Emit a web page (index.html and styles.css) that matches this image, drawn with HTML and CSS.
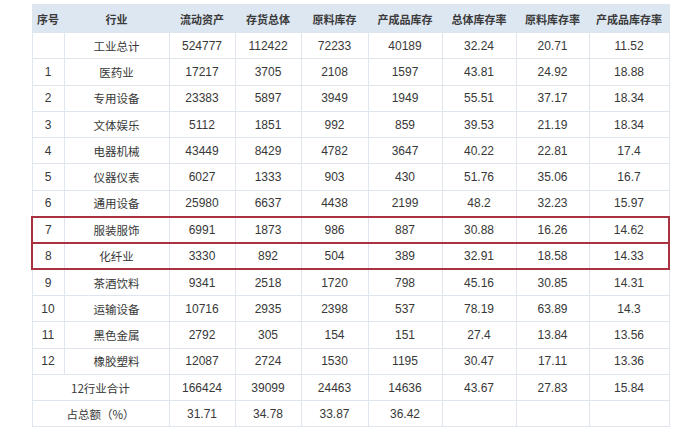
FILE: index.html
```html
<!DOCTYPE html>
<html lang="zh">
<head>
<meta charset="utf-8">
<link rel="stylesheet" href="styles.css">
</head>
<body>
<table class="data">
<colgroup>
<col class="c1"><col class="c2"><col class="c3"><col class="c4"><col class="c5"><col class="c6"><col class="c7"><col class="c8"><col class="c9">
</colgroup>
<thead>
<tr class="head"><th>序号</th><th>行业</th><th>流动资产</th><th>存货总体</th><th>原料库存</th><th>产成品库存</th><th>总体库存率</th><th>原料库存率</th><th>产成品库存率</th></tr>
</thead>
<tbody>
<tr><td></td><td class="cn">工业总计</td><td>524777</td><td>112422</td><td>72233</td><td>40189</td><td>32.24</td><td>20.71</td><td>11.52</td></tr>
<tr><td>1</td><td class="cn">医药业</td><td>17217</td><td>3705</td><td>2108</td><td>1597</td><td>43.81</td><td>24.92</td><td>18.88</td></tr>
<tr><td>2</td><td class="cn">专用设备</td><td>23383</td><td>5897</td><td>3949</td><td>1949</td><td>55.51</td><td>37.17</td><td>18.34</td></tr>
<tr><td>3</td><td class="cn">文体娱乐</td><td>5112</td><td>1851</td><td>992</td><td>859</td><td>39.53</td><td>21.19</td><td>18.34</td></tr>
<tr><td>4</td><td class="cn">电器机械</td><td>43449</td><td>8429</td><td>4782</td><td>3647</td><td>40.22</td><td>22.81</td><td>17.4</td></tr>
<tr><td>5</td><td class="cn">仪器仪表</td><td>6027</td><td>1333</td><td>903</td><td>430</td><td>51.76</td><td>35.06</td><td>16.7</td></tr>
<tr><td>6</td><td class="cn">通用设备</td><td>25980</td><td>6637</td><td>4438</td><td>2199</td><td>48.2</td><td>32.23</td><td>15.97</td></tr>
<tr class="hl"><td>7</td><td class="cn">服装服饰</td><td>6991</td><td>1873</td><td>986</td><td>887</td><td>30.88</td><td>16.26</td><td>14.62</td></tr>
<tr class="hl"><td>8</td><td class="cn">化纤业</td><td>3330</td><td>892</td><td>504</td><td>389</td><td>32.91</td><td>18.58</td><td>14.33</td></tr>
<tr><td>9</td><td class="cn">茶酒饮料</td><td>9341</td><td>2518</td><td>1720</td><td>798</td><td>45.16</td><td>30.85</td><td>14.31</td></tr>
<tr><td>10</td><td class="cn">运输设备</td><td>10716</td><td>2935</td><td>2398</td><td>537</td><td>78.19</td><td>63.89</td><td>14.3</td></tr>
<tr><td>11</td><td class="cn">黑色金属</td><td>2792</td><td>305</td><td>154</td><td>151</td><td>27.4</td><td>13.84</td><td>13.56</td></tr>
<tr><td>12</td><td class="cn">橡胶塑料</td><td>12087</td><td>2724</td><td>1530</td><td>1195</td><td>30.47</td><td>17.11</td><td>13.36</td></tr>
<tr><td colspan="2" class="cn">12行业合计</td><td>166424</td><td>39099</td><td>24463</td><td>14636</td><td>43.67</td><td>27.83</td><td>15.84</td></tr>
<tr><td colspan="2" class="cn">占总额（%）</td><td>31.71</td><td>34.78</td><td>33.87</td><td>36.42</td><td></td><td></td><td></td></tr>
</tbody>
</table>
</body>
</html>
```
FILE: styles.css
```css
html, body {
  margin: 0;
  padding: 0;
  background: #ffffff;
}
body {
  padding: 4px 0 0 31px;
  font-family: "Liberation Sans", "Noto Sans CJK SC", sans-serif;
  color: #383838;
}
.data {
  border-collapse: collapse;
  table-layout: fixed;
  width: 637px;
}
.c1 { width: 32px; }
.c2 { width: 105px; }
.c3 { width: 66px; }
.c4 { width: 66px; }
.c5 { width: 67px; }
.c6 { width: 74px; }
.c7 { width: 74px; }
.c8 { width: 73px; }
.c9 { width: 80px; }
.data tr {
  height: 26.3px;
}
.data tr.head {
  height: 28px;
}
.data th,
.data td {
  border: 1px solid #dfe5ec;
  text-align: center;
  padding: 0;
  line-height: 14px;
  white-space: nowrap;
}
.data th {
  background: #dde7f2;
  font-family: "Noto Sans CJK SC", sans-serif;
  font-size: 11px;
  font-weight: 700;
  color: #3a3a3a;
}
.data td {
  font-size: 12px;
}
.data td.cn {
  font-family: "Noto Sans CJK SC", sans-serif;
  font-size: 11.5px;
}
.data tr.hl td {
  border-top: 2px solid #a8323f;
  border-bottom: 2px solid #a8323f;
}
.data tr.hl td:first-child {
  border-left: 2px solid #a8323f;
}
.data tr.hl td:last-child {
  border-right: 2px solid #a8323f;
}
```
